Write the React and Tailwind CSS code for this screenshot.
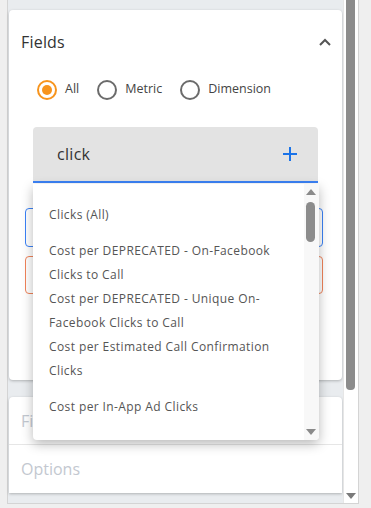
import React from "react";

const items = [
  ["Clicks (All)"],
  ["Cost per DEPRECATED - On-Facebook", "Clicks to Call"],
  ["Cost per DEPRECATED - Unique On-", "Facebook Clicks to Call"],
  ["Cost per Estimated Call Confirmation", "Clicks"],
  ["Cost per In-App Ad Clicks"],
];

function Radio({ checked, label }) {
  return (
    <div className="flex items-center gap-[8px]">
      <div
        className={
          "w-[20px] h-[20px] rounded-full border-[2px] flex items-center justify-center " +
          (checked ? "border-[#f7941d]" : "border-[#6b6b6b]")
        }
      >
        {checked && <div className="w-[10px] h-[10px] rounded-full bg-[#f7941d]" />}
      </div>
      <span className="text-[12.5px] text-[#444]">{label}</span>
    </div>
  );
}

export default function App() {
  return (
    <div
      className="w-[371px] h-[508px] bg-[#efefef] pl-[7px] overflow-hidden"
      style={{ fontFamily: "'Open Sans', 'DejaVu Sans', sans-serif" }}
    >
      <div className="w-[352px] h-[504px] border border-t-0 border-[#d4d4d4] flex relative">
        {/* content */}
        <div className="w-[335px] h-full bg-[#e9ecef] pt-[10px] px-[1px] flex flex-col">
          <div className="h-[370px] bg-white rounded-[4px] shadow-[0_1px_3px_rgba(0,0,0,0.25)] flex flex-col">
            <div className="h-[64px] flex items-center justify-between pl-[12px] pr-[10px]">
              <span className="text-[16px] text-[#333] tracking-[0.2px]">Fields</span>
              <svg width="14" height="10" viewBox="0 0 14 10">
                <path d="M2 8 L7 3 L12 8" fill="none" stroke="#555" strokeWidth="2" />
              </svg>
            </div>
            <div className="h-[31px] flex items-center gap-[18px] pl-[28px]">
              <Radio checked label="All" />
              <Radio label="Metric" />
              <Radio label="Dimension" />
            </div>
            <div className="mt-[22px] mx-[24px] h-[56px] bg-[#e3e3e3] rounded-t-[4px] border-b-[2px] border-[#3b82f6] flex items-center justify-between pl-[24px] pr-[20px]">
              <span className="text-[16px] text-[#333] tracking-[0.3px]">click</span>
              <svg width="16" height="16" viewBox="0 0 16 16">
                <path d="M8 1 V15 M1 8 H15" stroke="#1a73e8" strokeWidth="2" />
              </svg>
            </div>
            <div className="mt-[25px] ml-[16px] mr-[19px] h-[39px] rounded-[4px] border border-[#3b82f6]" />
            <div className="mt-[9px] ml-[16px] mr-[19px] h-[38px] rounded-[4px] border border-[#f0835a]" />
          </div>
          <div className="mt-[17px] bg-white rounded-t-[4px] shadow-[0_1px_3px_rgba(0,0,0,0.25)]">
            <div className="h-[48px] flex items-center pl-[12px] border-b border-[#e6e6e6]">
              <span className="text-[16px] text-[#c3c8d0]">Filters</span>
            </div>
            <div className="h-[48px] flex items-center pl-[12px] rounded-b-[4px]">
              <span className="text-[16px] text-[#c3c8d0]">Options</span>
            </div>
          </div>
        </div>
        {/* outer scrollbar */}
        <div className="w-[15px] h-full bg-white relative border-l border-[#e6e6e6]">
          <div className="absolute left-[2px] top-0 w-[9px] h-[390px] bg-[#8c8c8c] rounded-b-[4px]" />
          <svg className="absolute left-[2px] top-[492px]" width="10" height="8" viewBox="0 0 10 8">
            <path d="M0 1 H10 L5 7 Z" fill="#7a7a7a" />
          </svg>
        </div>

        {/* dropdown */}
        <div className="absolute left-[25px] top-[184px] w-[286px] h-[256px] bg-white rounded-b-[4px] shadow-[0_4px_12px_rgba(0,0,0,0.28)] overflow-hidden">
          <div className="pt-[7px] pr-[16px]">
            {items.map((lines, i) => (
              <div key={i} className="min-h-[48px] flex flex-col justify-center pl-[16px] text-[12px] leading-[24px] tracking-[0.4px] text-[#555]">
                {lines.map((l, j) => (
                  <span key={j} className="whitespace-nowrap">{l}</span>
                ))}
              </div>
            ))}
          </div>
          <div className="absolute right-0 top-0 w-[15px] h-full bg-[#f8f8f8]">
            <svg className="absolute left-[2px] top-[4px]" width="10" height="8" viewBox="0 0 10 8">
              <path d="M0 7 H10 L5 1 Z" fill="#8a8a8a" />
            </svg>
            <div className="absolute left-[2px] top-[18px] w-[9px] h-[40px] bg-[#8c8c8c] rounded-[5px]" />
            <svg className="absolute left-[2px] top-[244px]" width="10" height="8" viewBox="0 0 10 8">
              <path d="M0 1 H10 L5 7 Z" fill="#8a8a8a" />
            </svg>
          </div>
        </div>
      </div>
    </div>
  );
}
